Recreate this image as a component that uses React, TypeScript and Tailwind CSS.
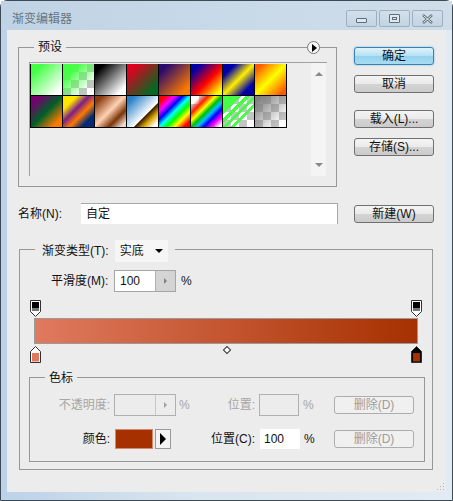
import { type ReactNode } from "react";

const row1 = [
  "bg-[linear-gradient(135deg,#45ff45_18%,#ffffff_88%)]",
  "bg-[linear-gradient(135deg,#45ff45_25%,#45ff4500_80%),conic-gradient(#c4c4c4_25%,#ffffff_0_50%,#c4c4c4_0_75%,#ffffff_0)] [background-size:100%_100%,16px_16px]",
  "bg-[linear-gradient(135deg,#000000_15%,#ffffff_85%)]",
  "bg-[linear-gradient(135deg,#e00020_15%,#006a20_85%)]",
  "bg-[linear-gradient(135deg,#2a0a6c_15%,#ff7a00_85%)]",
  "bg-[linear-gradient(135deg,#0000a8_15%,#ff0000_55%,#ffff00_90%)]",
  "bg-[linear-gradient(135deg,#0000a8_20%,#ffee00_50%,#0000a8_80%)]",
  "bg-[linear-gradient(135deg,#ff5a00_10%,#ffff00_50%,#ff5a00_90%)]",
];

const row2 = [
  "bg-[linear-gradient(135deg,#75006f_15%,#005f28_50%,#ff7a00_85%)]",
  "bg-[linear-gradient(135deg,#ffe600_22%,#7d2088_42%,#ff7a00_60%,#002a78_80%)]",
  "bg-[linear-gradient(135deg,#8a3c10_12%,#ffd2b4_48%,#7c3408_72%,#eadbd0_92%)]",
  "bg-[linear-gradient(135deg,#2a80c8_12%,#ffffff_60%,#3a1800_62%,#d8a400_76%,#ffffff_92%)]",
  "bg-[linear-gradient(135deg,#ff0000_10%,#ff00ff_25%,#0000ff_38%,#00ffff_50%,#00ff00_62%,#ffff00_75%,#ff0000_90%)]",
  "bg-[linear-gradient(135deg,#ffffff00_15%,#ff2000_28%,#ffff00_40%,#00c000_50%,#00c0ff_60%,#0000ff_70%,#ff00ff_82%,#ffffff00_95%),conic-gradient(#c4c4c4_25%,#ffffff_0_50%,#c4c4c4_0_75%,#ffffff_0)] [background-size:100%_100%,16px_16px]",
  "bg-[linear-gradient(135deg,#45ff45_30%,#45ff4500_30%_36%,#45ff45_36%_44%,#45ff4500_44%_49%,#45ff45_49%_56%,#45ff4500_56%_62%,#45ff45_62%_68%,#45ff4500_68%),conic-gradient(#c4c4c4_25%,#ffffff_0_50%,#c4c4c4_0_75%,#ffffff_0)] [background-size:100%_100%,16px_16px]",
  "bg-[linear-gradient(135deg,#808080_10%,#80808000_85%),conic-gradient(#c4c4c4_25%,#ffffff_0_50%,#c4c4c4_0_75%,#ffffff_0)] [background-size:100%_100%,16px_16px]",
];

function Button({
  children,
  className = "",
  disabled,
}: {
  children: ReactNode;
  className?: string;
  disabled?: boolean;
}) {
  return (
    <div
      className={`flex h-[18px] w-[80px] items-center justify-center rounded-[3px] border text-[12px] leading-none ${
        disabled
          ? "border-[#adadad] bg-[#f0f0f0] text-[#9d9d9d]"
          : "border-[#707070] bg-[linear-gradient(#f4f4f4,#ebebeb_48%,#d4d4d4_52%,#cbcbcb)] text-[#111111]"
      } ${className}`}
    >
      {children}
    </div>
  );
}

function TopStop({ fill }: { fill: string }) {
  return (
    <svg width="12" height="17" viewBox="0 0 12 17" className="block">
      <path d="M0.5 0.5H10.5V11.5L5.5 16.5L0.5 11.5Z" fill="#ffffff" stroke="#303030" />
      <rect x="2" y="2" width="7" height="9" fill={fill} />
      <rect x="2" y="8" width="7" height="3" fill="#777777" />
    </svg>
  );
}

function BottomStop({ fill, active }: { fill: string; active?: boolean }) {
  return (
    <svg width="12" height="17" viewBox="0 0 12 17" className="block">
      <path
        d="M0.5 16.5V5.5L5.5 0.5L10.5 5.5V16.5Z"
        fill={active ? "#000000" : "#ffffff"}
        stroke="#303030"
      />
      <rect x="2" y="7" width="7" height="8.5" fill={fill} />
    </svg>
  );
}

function Spinner({ disabled }: { disabled?: boolean }) {
  return (
    <div
      className={`flex h-[20px] w-[20px] items-center justify-center border-l ${
        disabled ? "border-[#c8c8c8] bg-[#ececec]" : "border-[#b0b0b0] bg-[#d4d4d4]"
      }`}
    >
      <div
        className={`h-0 w-0 border-y-[3px] border-l-[3px] border-y-transparent ${
          disabled ? "border-l-[#a0a0a0]" : "border-l-[#808080]"
        }`}
      />
    </div>
  );
}

function CaptionButton({ children }: { children: ReactNode }) {
  return (
    <div className="flex h-[17px] w-[31px] items-center justify-center rounded-[2px] border border-[#9db0c1] bg-[linear-gradient(#d3e0eb,#c3d3e0)]">
      {children}
    </div>
  );
}

export default function App() {
  return (
    <div className="flex h-[501px] w-[453px] flex-col rounded-t-[7px] border border-[#3d4a55] bg-[linear-gradient(90deg,#bcd2e8,#d8e4ee_40%,#e2ebf3)] font-['Liberation_Sans','Noto_Sans_CJK_SC',sans-serif] text-[12px] text-[#111111]">
      {/* Title bar */}
      <div className="flex h-[29px] shrink-0 items-start justify-between bg-[linear-gradient(90deg,#c0d3e4,#c8d9e8_50%,#cfdde9)] pl-[11px] pr-[9px]">
        <span className="mt-[11px] text-[12px] leading-[14px] text-[#66747f]">渐变编辑器</span>
        <div className="mt-[9px] flex gap-[2px]">
          <CaptionButton>
            <div className="mt-[3px] h-[5px] w-[11px] rounded-[1px] border border-[#5d6d7a] bg-[#dfe8ef]" />
          </CaptionButton>
          <CaptionButton>
            <div className="flex h-[9px] w-[11px] items-center justify-center rounded-[1px] border border-[#5d6d7a] bg-[#dfe8ef]">
              <div className="h-[3px] w-[5px] border border-[#5d6d7a]" />
            </div>
          </CaptionButton>
          <CaptionButton>
            <svg width="13" height="10" viewBox="0 0 13 10">
              <path d="M2 1L11 9M11 1L2 9" stroke="#5d6d7a" strokeWidth="2.4" />
              <path d="M2.5 1.5L10.5 8.5M10.5 1.5L2.5 8.5" stroke="#eef3f7" strokeWidth="1" />
            </svg>
          </CaptionButton>
        </div>
      </div>

      {/* Client area */}
      <div className="relative mx-[6px] mb-[8px] flex-1 bg-[#ececec] pl-[11px] pt-[17px]">
        <div className="flex gap-[17px]">
          {/* Presets */}
          <div className="relative h-[140px] w-[319px] border border-[#979797] pl-[10px] pt-[14px]">
            <span className="absolute left-[15px] top-[-9px] bg-[#ececec] px-[4px] text-[12px] leading-[16px]">
              预设
            </span>
            <div className="absolute right-[16px] top-[-7px] flex h-[13px] w-[13px] items-center justify-center rounded-full border border-[#777777] bg-[#f6f6f6]">
              <div className="ml-[1px] h-0 w-0 border-y-[4px] border-l-[5px] border-y-transparent border-l-black" />
            </div>
            <div className="flex h-[114px] w-[298px] border-l border-t border-[#a0a0a0] bg-[#ededed]">
              <div className="pt-[1px]">
                <div className="flex flex-col gap-[1px] bg-black pb-[1px] pl-[1px]">
                  <div className="flex">
                    {row1.map((c) => (
                      <div key={c} className={`mr-[1px] h-[31px] w-[31px] ${c}`} />
                    ))}
                  </div>
                  <div className="flex">
                    {row2.map((c) => (
                      <div key={c} className={`mr-[1px] h-[31px] w-[31px] ${c}`} />
                    ))}
                  </div>
                </div>
              </div>
              <div className="ml-auto mr-[1px] flex w-[15px] flex-col items-center justify-between bg-[#f4f4f4] py-[9px]">
                <div className="h-0 w-0 border-x-[4px] border-b-[4px] border-x-transparent border-b-[#8a8a8a]" />
                <div className="h-0 w-0 border-x-[4px] border-t-[4px] border-x-transparent border-t-[#8a8a8a]" />
              </div>
            </div>
          </div>

          {/* Dialog buttons */}
          <div className="flex flex-col">
            <Button className="!border-[#3c7fb1] !bg-[linear-gradient(#dff3fb,#b6e2f5_48%,#94d3ee_52%,#a8dcf2)] shadow-[0_0_2px_#5ab6e4]">
              确定
            </Button>
            <Button className="mt-[10px]">取消</Button>
            <Button className="mt-[17px]">载入(L)...</Button>
            <Button className="mt-[10px]">存储(S)...</Button>
          </div>
        </div>

        {/* Name */}
        <div className="mt-[16px] flex h-[21px] items-center">
          <span className="w-[63px] whitespace-nowrap">名称(N):</span>
          <div className="flex h-[21px] w-[257px] items-center border-r border-t border-[#a8a8a8] bg-white pl-[5px] leading-none">
            自定
          </div>
          <Button className="ml-[16px]">新建(W)</Button>
        </div>

        {/* Gradient type */}
        <div className="relative ml-[1px] mt-[25px] h-[221px] w-[414px] border border-[#979797] pl-[10px] pt-[20px]">
          <div className="absolute left-[15px] top-[-10px] flex h-[22px] items-center gap-[6px] bg-[#ececec] px-[7px]">
            <span>渐变类型(T):</span>
            <div className="flex h-[22px] w-[53px] items-center justify-between bg-[#f6f6f6] pl-[5px] pr-[5px]">
              实底
              <div className="h-0 w-0 border-x-[4px] border-t-[4px] border-x-transparent border-t-black" />
            </div>
          </div>

          <div className="flex h-[22px] items-center">
            <span className="ml-[21px] w-[63px] whitespace-nowrap">平滑度(M):</span>
            <div className="flex h-[22px] w-[62px] items-center border border-[#a5a5a5] bg-white pl-[5px]">
              <span className="flex-1">100</span>
              <Spinner />
            </div>
            <span className="ml-[5px]">%</span>
          </div>

          {/* Gradient bar with its stops */}
          <div className="mt-[8px] flex w-[393px] justify-between">
            <TopStop fill="#000000" />
            <TopStop fill="#000000" />
          </div>
          <div className="ml-[4px] mt-[1px] h-[26px] w-[384px] border border-[#9a9a9a] bg-[linear-gradient(90deg,#e07a5f,#a63000)]" />
          <div className="mt-[2px] flex w-[393px] items-start justify-between">
            <BottomStop fill="#e07a5f" />
            <div className="mt-[1px] h-[6px] w-[6px] rotate-45 border border-[#303030] bg-white" />
            <BottomStop fill="#a63000" active />
          </div>

          {/* Colour stops */}
          <div className="relative ml-[-1px] mt-[14px] h-[85px] w-[396px] border border-[#979797] pl-[4px] pt-[16px]">
            <span className="absolute left-[15px] top-[-8px] bg-[#ececec] px-[4px] leading-[16px]">
              色标
            </span>

            <div className="flex h-[22px] items-center text-[#a6a6a6]">
              <span className="w-[80px] whitespace-nowrap pr-[4px] text-right">不透明度:</span>
              <div className="flex h-[22px] w-[62px] items-center justify-end border border-[#b0b0b0] bg-[#ececec]">
                <Spinner disabled />
              </div>
              <span className="ml-[3px] w-[48px]">%</span>
              <span className="w-[28px] whitespace-nowrap text-right">位置:</span>
              <div className="ml-[4px] h-[22px] w-[40px] border border-[#b0b0b0]" />
              <span className="ml-[4px] w-[31px]">%</span>
              <Button disabled>删除(D)</Button>
            </div>

            <div className="mt-[13px] flex h-[20px] items-center">
              <span className="w-[80px] whitespace-nowrap pr-[4px] text-right">颜色:</span>
              <div className="ml-[1px] h-[20px] w-[38px] border border-[#d08a70] bg-[#a63000]" />
              <div className="ml-[2px] flex h-[20px] w-[16px] items-center justify-center border border-[#9a9a9a] bg-[#f4f4f4]">
                <div className="h-0 w-0 border-y-[6px] border-l-[6px] border-y-transparent border-l-black" />
              </div>
              <span className="ml-[36px] w-[48px] whitespace-nowrap text-right">位置(C):</span>
              <div className="ml-[5px] flex h-[20px] w-[40px] items-center bg-white pl-[4px]">100</div>
              <span className="ml-[4px] w-[30px]">%</span>
              <Button disabled>删除(D)</Button>
            </div>
          </div>
        </div>

        {/* Resize grip */}
        <svg width="9" height="9" viewBox="0 0 9 9" className="absolute bottom-[1px] right-[1px]">
          <path d="M7 1h1v1H7zM7 4h1v1H7zM7 7h1v1H7zM4 4h1v1H4zM4 7h1v1H4zM1 7h1v1H1z" fill="#b4b4b4" />
        </svg>
      </div>
    </div>
  );
}
